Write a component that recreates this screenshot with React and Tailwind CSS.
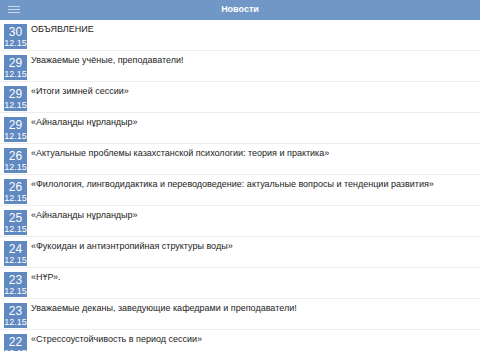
const items = [
  ["30", "ОБЪЯВЛЕНИЕ"],
  ["29", "Уважаемые учёные, преподаватели!"],
  ["29", "«Итоги зимней сессии»"],
  ["29", "«Айналаңды нұрландыр»"],
  ["26", "«Актуальные проблемы казахстанской психологии: теория и практика»"],
  ["26", "«Филология, лингводидактика и переводоведение: актуальные вопросы и тенденции развития»"],
  ["25", "«Айналаңды  нұрландыр»"],
  ["24", "«Фукоидан и антиэнтропийная структуры воды»"],
  ["23", "«НҰР»."],
  ["23", "Уважаемые деканы, заведующие кафедрами и преподаватели!"],
  ["22", "«Стрессоустойчивость в период сессии»"],
];

export default function App() {
  return (
    <div className="w-[480px] h-[351px] overflow-hidden bg-white" style={{ fontFamily: '"Liberation Sans", Arial, sans-serif' }}>
      <div className="h-[20px] bg-[#7097c5] flex items-center relative">
        <div className="absolute left-[8px] top-[6px] flex flex-col gap-[2px]">
          <div className="w-[12px] h-[1px] bg-[#c9d8ec]" />
          <div className="w-[12px] h-[1px] bg-[#c9d8ec]" />
          <div className="w-[12px] h-[1px] bg-[#c9d8ec]" />
        </div>
        <div className="flex-1 text-center text-white font-bold text-[9px]">Новости</div>
      </div>
      <div className="flex flex-col">
        {items.map(([d, t], i) => (
          <div key={i} className="h-[31px] flex border-b border-[#ededed] shrink-0">
            <div className="ml-[4px] mt-[4px] w-[23px] h-[25px] bg-[#5f89c0] flex flex-col items-center text-white shrink-0 overflow-hidden">
              <div className="text-[12px] h-[12px] leading-[12px] mt-[2px]">{d}</div>
              <div className="text-[9px] h-[9px] leading-[9px] mt-[1px]">12.15</div>
            </div>
            <div className="ml-[4px] mt-[5px] text-[9px] text-[#222] leading-none">{t}</div>
          </div>
        ))}
      </div>
    </div>
  );
}
